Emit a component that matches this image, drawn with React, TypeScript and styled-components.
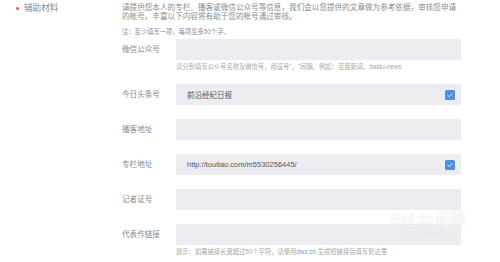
import React from "react"
import styled, { createGlobalStyle } from "styled-components"

const fontStack = `"Liberation Sans", "Noto Sans CJK SC", sans-serif`

const GlobalStyle = createGlobalStyle`
  body {
    margin: 0;
    background: #fff;
    font-family: ${fontStack};
  }
`

type FieldProps = {
  label: string
  value?: string
  checked?: boolean
  hint?: React.ReactNode
}

const CheckIcon = () => (
  <svg width="10" height="10" viewBox="0 0 10 10">
    <rect width="10" height="10" rx="1.5" fill="#4d8fe2" />
    <path d="M2.6 5.2 L4.3 6.7 L7.4 3.4" stroke="#dfeeff" strokeWidth="0.9" fill="none" />
  </svg>
)

const Field = ({ label, value, checked, hint }: FieldProps) => (
  <Row>
    <Label>{label}</Label>
    <div>
      <Input>
        <Value>{value}</Value>
        {checked && <CheckIcon />}
      </Input>
      {hint && <Hint>{hint}</Hint>}
    </div>
  </Row>
)

const App = () => {
  return (
    <Page>
      <GlobalStyle />
      <Side>
        <Bullet />
        <SideTitle>辅助材料</SideTitle>
      </Side>
      <Main>
        <Description>
          请提供您本人的专栏、播客或微信公众号等信息，我们会以您提供的文章做为参考依据，审核您申请
          <br />
          的帐号。丰富以下内容将有助于您的帐号通过审核。
        </Description>
        <Note>注：至少填写一项，每项至多50个字。</Note>
        <Form>
          <Field
            label="微信公众号"
            hint={`请分别填写公众号名称及微信号，用逗号"，"间隔。例如：百度新闻，baidu-news`}
          />
          <Field label="今日头条号" value="前沿经纪日报" checked />
          <Field label="播客地址" />
          <Field label="专栏地址" value="http://toutiao.com/m5530256445/" checked />
          <Field label="记者证号" />
          <Field
            label="代表作链接"
            hint={
              <>
                提示：如果链接长度超过50个字符，请使用<Link>dwz.cn</Link> 生成短链接后填写到这里
              </>
            }
          />
        </Form>
      </Main>
      <Watermark>
        <Mark>
          Bai<Paw>du</Paw>经验
        </Mark>
        <MarkSub>jingyan.baidu.com</MarkSub>
      </Watermark>
    </Page>
  )
}

export default App

const Page = styled.div`
  position: relative;
  display: flex;
  width: 500px;
  height: 262px;
  overflow: hidden;
  background: #fff;
`

const Side = styled.div`
  width: 122px;
  display: flex;
  align-items: flex-start;
  padding: 3px 0 0 16px;
  box-sizing: border-box;
`

const Bullet = styled.span`
  width: 3px;
  height: 3px;
  border-radius: 50%;
  background: #e0575b;
  margin: 4px 5px 0 0;
`

const SideTitle = styled.span`
  font-size: 8.6px;
  line-height: 11px;
  color: #8a8a8a;
`

const Main = styled.div`
  width: 340px;
  padding-top: 3px;
`

const Description = styled.p`
  margin: 0;
  font-size: 7.6px;
  line-height: 9px;
  color: #8c8c8c;
  white-space: nowrap;
`

const Note = styled.p`
  margin: 7px 0 0;
  font-size: 6.3px;
  line-height: 7px;
  color: #8c8c8c;
`

const Form = styled.div`
  margin-top: 4px;
  display: flex;
  flex-direction: column;
  gap: 14px;
`

const Row = styled.div`
  display: grid;
  grid-template-columns: 54px 285px;
`

const Label = styled.span`
  font-size: 7.6px;
  line-height: 21px;
  color: #8a8a8a;
`

const Input = styled.div`
  height: 21px;
  background: #ededf1;
  display: flex;
  align-items: center;
  justify-content: space-between;
  padding: 0 6px 0 11px;
  box-sizing: border-box;
`

const Value = styled.span`
  font-size: 7.5px;
  color: #555;
`

const Hint = styled.p`
  margin: 3px 0 0;
  font-size: 6.3px;
  line-height: 7px;
  color: #a8a8a8;
  white-space: nowrap;
`

const Link = styled.span`
  color: #6f9fd8;
`

const Watermark = styled.div`
  position: absolute;
  left: 390px;
  top: 210px;
  display: flex;
  flex-direction: column;
  align-items: center;
  pointer-events: none;
`

const Mark = styled.div`
  font-size: 15px;
  font-weight: bold;
  line-height: 18px;
  color: rgba(255, 255, 255, 0.6);
  -webkit-text-stroke: 0.4px rgba(200, 200, 200, 0.45);
`

const Paw = styled.span`
  margin: 0 2px;
`

const MarkSub = styled.div`
  font-size: 7px;
  line-height: 9px;
  color: rgba(225, 225, 225, 0.5);
`
